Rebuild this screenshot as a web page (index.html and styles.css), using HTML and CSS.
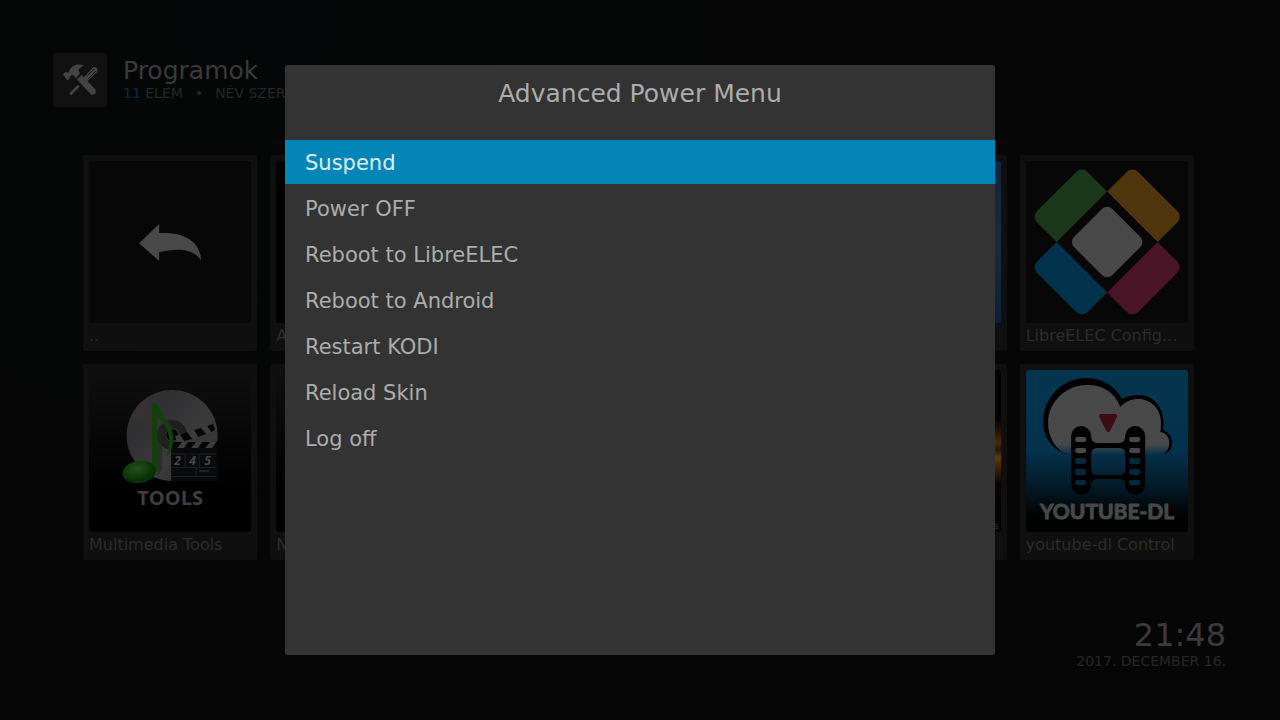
FILE: index.html
```
<!DOCTYPE html>
<html lang="hu">
<head>
    <meta charset="UTF-8">
    <meta name="viewport" content="width=device-width, initial-scale=1.0">
    <title>Programok</title>
    <link rel="stylesheet" href="styles.css">
</head>
<body>

    <div class="screen">
        <header class="header">
            <div class="header-icon">
                <svg viewBox="0 0 54 54">
                    <path d="M30.500 24.500 L40 14.500 Q43 13 44.500 16 Q45 18 43.500 19.500 L34 28.500 Z" fill="#434343"/>
                    <path d="M33.500 23.500 L41 16 M35.500 25.500 L43 18" stroke="#151515" stroke-width="1"/>
                    <path d="M25 33.500 L18 40.500" stroke="#434343" stroke-width="3" stroke-linecap="round"/>
                    <path d="M24 26.500 L28.500 22 L42.500 36.500 Q43.500 39 42 41 Q39.500 42.500 37.500 41 Z" fill="#434343"/>
                    <path d="M10 21.500 L12.500 19 L16 19.500 C17 14 21 11.500 25.500 11.500 Q29 11.500 31 12.500 C28 14 26 15.500 25.500 17.500 L27 20.500 L23 25 L20 22 C18 22 16.500 23 16.500 25.500 L14.500 27.500 Z" fill="#434343"/>
                </svg>
            </div>
            <div>
                <h1>Programok</h1>
                <p class="info"><span><span class="count">11</span> ELEM</span> <span>•</span> <span>NÉV SZER</span></p>
            </div>
        </header>

        <main class="grid">
            <a class="card" href="#">
                <svg class="thumb" viewBox="0 0 162 162">
                    <path d="M50 82.300 L70 63 V72 C94 71 111 79 112 99.500 C104 87 88 87 70 91 V100 Z" fill="#484848"/>
                </svg>
                <span>..</span>
            </a>
            <a class="card" href="#"><div class="thumb black"></div><span>A</span></a>
            <a class="card" href="#"><div class="thumb"></div></a>
            <a class="card" href="#"><div class="thumb"></div></a>
            <a class="card" href="#"><div class="thumb blue"></div></a>
            <a class="card" href="#">
                <svg class="thumb" viewBox="0 0 162 162">
                    <defs>
                        <path id="petal" d="M81 30.500 L61.400 10.900 A8 8 0 0 0 50 10.900 L10.900 50 A8 8 0 0 0 10.900 61.400 L30.500 81 Z"/>
                    </defs>
                    <use href="#petal" fill="#1b3719"/>
                    <use href="#petal" fill="#4f350b" transform="rotate(90 81 81)"/>
                    <use href="#petal" fill="#491426" transform="rotate(180 81 81)"/>
                    <use href="#petal" fill="#00324b" transform="rotate(270 81 81)"/>
                    <rect x="54" y="54" width="54" height="54" rx="7" fill="#484848" transform="rotate(45 81 81)"/>
                </svg>
                <span>LibreELEC Config...</span>
            </a>

            <a class="card" href="#">
                <svg class="thumb fade" viewBox="0 0 162 162">
                    <defs>
                        <linearGradient id="disc" x1="0" y1="0" x2="1" y2="1">
                            <stop offset="0" stop-color="#353535"/>
                            <stop offset="0.300" stop-color="#303033"/>
                            <stop offset="0.600" stop-color="#3a3a3a"/>
                            <stop offset="1" stop-color="#2b2b2d"/>
                        </linearGradient>
                        <radialGradient id="head" cx="0.450" cy="0.350">
                            <stop offset="0" stop-color="#22531a"/>
                            <stop offset="1" stop-color="#092f04"/>
                        </radialGradient>
                    </defs>
                    <circle cx="83" cy="65.500" r="45.500" fill="url(#disc)"/>
                    <path d="M83 65 L42 46 Q46 37 54 31 Z" fill="#3a3230" opacity="0.600"/>
                    <circle cx="83" cy="65" r="11" fill="none" stroke="#1f1f20" stroke-width="8"/>
                    <circle cx="83" cy="65" r="6" fill="#030303"/>
                    <path d="M68 60 H73 V100 L68 106 Z" fill="#1b2b19" opacity="0.600"/>
                    <!-- clapper board -->
                    <path d="M82 78 H128 V111 H82 Z" fill="#090a0b"/>
                    <path d="M86 66 L125 54 L127 61 L88 74 Z" fill="#3c3c3c"/>
                    <path d="M91 65 L98 62 L103 69 L95 71 Z M105 60 L112 58 L117 64 L109 67 Z M118 56 L124 54 L126 60 L122 62 Z" fill="#050505"/>
                    <path d="M83 72 H128 V78 H83 Z" fill="#050505"/>
                    <path d="M93 72 H99 L95 78 H88 Z M107 72 H113 L109 78 H102 Z M121 72 H127 L123 78 H116 Z" fill="#3c3c3c"/>
                    <path d="M82 84 H127 M82 97.500 H127 M82 106.500 H127 M96 84 V97 M110 84 V97 M107 97 V106" fill="none" stroke="#1c1e20"/>
                    <path d="M110 101 H120" stroke="#38393b"/>
                    <g class="clapper-text">
                        <text x="85" y="95">2</text>
                        <text x="100" y="95">4</text>
                        <text x="115" y="95">5</text>
                    </g>
                    <!-- note -->
                    <path d="M63 33 H67 C72 45 84 53 84 68 C84 77 81 83 77 87 C82 74 82 58 68 47 V102 H63 Z" fill="#124009"/>
                    <ellipse cx="50" cy="102" rx="17" ry="11" fill="url(#head)" transform="rotate(-8 50 102)"/>
                    <text class="tools-text" x="81" y="135" text-anchor="middle">TOOLS</text>
                </svg>
                <span>Multimedia Tools</span>
            </a>
            <a class="card" href="#"><div class="thumb fade"></div><span>N</span></a>
            <a class="card" href="#"><div class="thumb"></div></a>
            <a class="card" href="#"><div class="thumb"></div></a>
            <a class="card" href="#"><div class="thumb fire">s</div></a>
            <a class="card" href="#">
                <svg class="thumb" viewBox="0 0 162 162">
                    <defs>
                        <linearGradient id="sky" gradientUnits="userSpaceOnUse" x1="0" y1="0" x2="0" y2="162">
                            <stop offset="0" stop-color="#04354f"/>
                            <stop offset="0.500" stop-color="#04314b"/>
                            <stop offset="0.720" stop-color="#031a27"/>
                            <stop offset="0.900" stop-color="#010202"/>
                        </linearGradient>
                        <linearGradient id="cloud" gradientUnits="userSpaceOnUse" x1="0" y1="74" x2="0" y2="85">
                            <stop offset="0" stop-color="#484848"/>
                            <stop offset="1" stop-color="#484848" stop-opacity="0"/>
                        </linearGradient>
                        <path id="cloud-shape" d="M42 85 C28 79 22 66 22 53 C22 31 41 15 61 15 C77 15 89 23 94 37 C100 31 106 29 113 29 C128 30 138 43 134 62 C140 63 143 67 143 73 C143 79 140 83 134 85 Z"/>
                    </defs>
                    <rect width="162" height="162" fill="url(#sky)"/>
                    <path d="M39 84 C24 78 17 65 17 52 C17 27 37 8 60 8 C76 8 89 16 96 29 C101 26 107 25 113 25 C128 25 140 39 137 60 C142 62 146 67 146 73 C146 80 141 85 133 84 Z" fill="#000"/>
                    <use href="#cloud-shape" fill="url(#sky)"/>
                    <use href="#cloud-shape" fill="url(#cloud)"/>
                    <path d="M75 46 H89 L82 60 Z" fill="#3b0c11" stroke="#3b0c11" stroke-width="4" stroke-linejoin="round"/>
                    <!-- film strip -->
                    <path fill-rule="evenodd" d="M45 66 A10 10 0 0 1 65 66 Q65 73 71 73 H93 Q99 73 99 66 A10 10 0 0 1 119 66 V115 A10 10 0 0 1 99 115 Q99 109 93 109 H71 Q65 109 65 115 A10 10 0 0 1 45 115 Z M71 78 Q65 78 65 84 V99 Q65 105 71 105 H93 Q99 105 99 99 V84 Q99 78 93 78 Z" fill="#000"/>
                    <g fill="#484848">
                        <rect x="49" y="67" width="11" height="5" rx="2"/>
                        <rect x="49" y="78" width="11" height="5" rx="2"/>
                        <rect x="103" y="67" width="11" height="5" rx="2"/>
                        <rect x="103" y="78" width="11" height="5" rx="2"/>
                    </g>
                    <g fill="#03283c">
                        <rect x="49" y="88" width="11" height="6" rx="2"/>
                        <rect x="49" y="99" width="11" height="6" rx="2"/>
                        <rect x="49" y="110" width="11" height="5" rx="2"/>
                        <rect x="103" y="88" width="11" height="6" rx="2"/>
                        <rect x="103" y="99" width="11" height="6" rx="2"/>
                        <rect x="103" y="110" width="11" height="5" rx="2"/>
                    </g>
                    <text class="ytdl-text" x="81" y="149" text-anchor="middle">YOUTUBE-DL</text>
                </svg>
                <span>youtube-dl Control</span>
            </a>
        </main>

        <footer class="clock">
            <div class="time">21:48</div>
            <div class="date">2017. DECEMBER 16.</div>
        </footer>
    </div>

    <div class="overlay">
        <div class="dialog" role="dialog" aria-labelledby="dialog-title">
            <h2 id="dialog-title">Advanced Power Menu</h2>
            <div class="menu">
                <button class="selected">Suspend</button>
                <button>Power OFF</button>
                <button>Reboot to LibreELEC</button>
                <button>Reboot to Android</button>
                <button>Restart KODI</button>
                <button>Reload Skin</button>
                <button>Log off</button>
            </div>
        </div>
    </div>

</body>
</html>
```
FILE: styles.css
```
* {
    box-sizing: border-box;
}
body {
    margin: 0;
    background-color: #060606;
    color: #3a3a3a;
    font-family: "DejaVu Sans", sans-serif;
}
h1, h2, p {
    margin: 0;
    font-weight: normal;
}
.screen {
    display: flex;
    flex-direction: column;
    min-height: 100vh;
    padding-top: 53px;
    background: radial-gradient(circle at 20% 0, #040707, #060606 40%);
}
/* header */
.header {
    display: flex;
    gap: 16px;
    padding-left: 53px;
    height: 54px;
}
.header-icon {
    width: 54px;
    height: 54px;
    background-color: #111;
    border-radius: 2px;
}
.header h1 {
    margin-top: 4px;
    font-size: 25px;
    line-height: 28px;
}
.info {
    display: flex;
    gap: 12px;
    font-size: 14px;
    line-height: 16px;
    color: #262626;
    white-space: nowrap;
}
.count {
    color: #032d42;
}
/* program cards */
.grid {
    display: grid;
    grid-template-columns: repeat(6, 1fr);
    gap: 13px;
    margin-top: 48px;
    padding: 0 86px 0 83px;
}
.card {
    display: flex;
    flex-direction: column;
    height: 196px;
    padding: 6px;
    background-color: #0f0f0f;
    border-radius: 2px;
    color: #2c2c2c;
    font-size: 16px;
    line-height: 26px;
    text-decoration: none;
    white-space: nowrap;
}
.thumb {
    display: block;
    width: 100%;
    height: 162px;
    flex-shrink: 0;
    background-color: #070707;
    border-radius: 3px;
}
.black {
    background-color: #000;
}
.blue {
    background: linear-gradient(#12233b, #1c2940 50%, #0a2038);
}
.fade {
    background: linear-gradient(#0f0f0f, #000 75%);
}
.fire {
    background: linear-gradient(#020202 30%, #1c0e04 36%, #4a2a06 45%, #2a1503 49%, #5c3a08 54%, #3a1c04 62%, #080402 70%, #020202);
    color: #333;
    font-size: 9px;
    line-height: 312px;
    text-align: right;
    padding-right: 2px;
}
.clapper-text {
    fill: #484848;
    font: italic bold 12px "Open Sans", sans-serif;
}
.tools-text {
    fill: #3e3e3e;
    font: bold 20px "Open Sans", sans-serif;
}
.ytdl-text {
    fill: #484848;
    stroke: #484848;
    stroke-linejoin: round;
    font: bold 21px Lato, sans-serif;
}
/* clock */
.clock {
    margin-top: auto;
    padding: 0 54px 51px 0;
    text-align: right;
}
.time {
    font-size: 32px;
    line-height: 36px;
}
.date {
    font-size: 14px;
    line-height: 16px;
    color: #262626;
}
/* power menu */
.overlay {
    position: absolute;
    inset: 0;
    display: flex;
    justify-content: center;
    align-items: center;
}
.dialog {
    width: calc(100vw - 570px);
    height: calc(100vh - 130px);
    background-color: #333;
    border-radius: 3px;
}
.dialog h2 {
    padding-top: 11px;
    height: 75px;
    color: #acacac;
    font-size: 25px;
    line-height: 36px;
    text-align: center;
}
.menu {
    display: flex;
    flex-direction: column;
    gap: 2px;
}
.menu button {
    height: 44px;
    padding: 2px 20px 0;
    border: none;
    background: none;
    color: #acacac;
    font-family: inherit;
    font-size: 21px;
    text-align: left;
    cursor: pointer;
}
.menu .selected {
    background-color: #0485b7;
    color: #e0eef4;
}
```
